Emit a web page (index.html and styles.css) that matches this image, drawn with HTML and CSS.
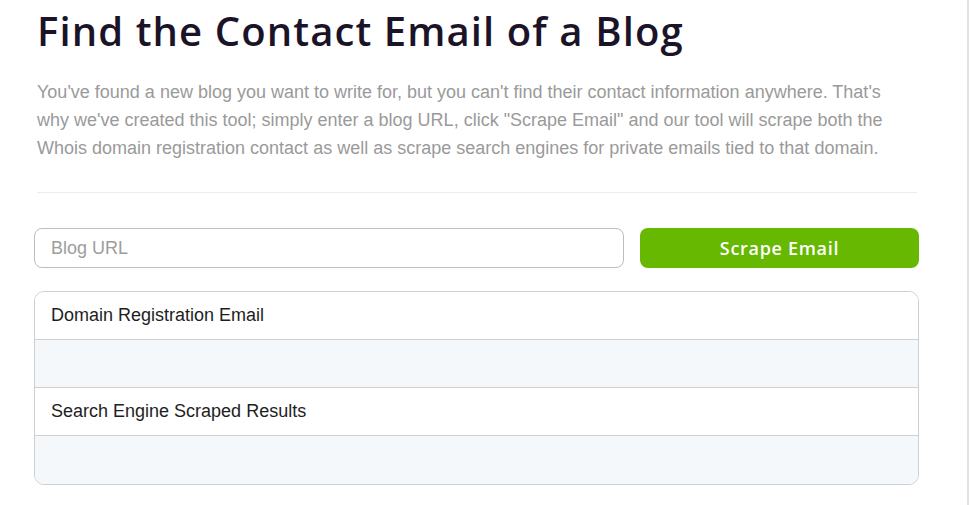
FILE: index.html
```html
<!DOCTYPE html>
<html>
<head>
<meta charset="utf-8">
<link rel="stylesheet" href="styles.css">
</head>
<body>
<div class="page">
  <main class="tool">
    <h1 class="title">Find the Contact Email of a Blog</h1>
    <p class="intro">You've found a new blog you want to write for, but you can't find their contact information anywhere. That's why we've created this tool; simply enter a blog URL, click "Scrape Email" and our tool will scrape both the Whois domain registration contact as well as scrape search engines for private emails tied to that domain.</p>
    <hr class="divider">
    <form class="search">
      <input class="url-input" type="text" placeholder="Blog URL">
      <button class="scrape-btn" type="button">Scrape Email</button>
    </form>
    <section class="results">
      <div class="results-head">Domain Registration Email</div>
      <div class="results-body"></div>
      <div class="results-head">Search Engine Scraped Results</div>
      <div class="results-body last"></div>
    </section>
  </main>
</div>
</body>
</html>
```

FILE: styles.css
```css
html, body {
  margin: 0;
  padding: 0;
  background: #fff;
}
.page {
  width: 967px;
  height: 505px;
  border-right: 2px solid #e2e2e2;
  box-sizing: content-box;
}
.tool {
  width: 885px;
  margin-left: 34px;
  padding-top: 1px;
}
.title {
  font-family: "Open Sans", "Noto Sans", sans-serif;
  font-weight: 600;
  font-size: 40px;
  line-height: 48px;
  color: #1b1429;
  margin: 6px 0 0 3px;
  letter-spacing: 1.1px;
}
.intro {
  font-family: "Liberation Sans", Arial, sans-serif;
  font-size: 18px;
  line-height: 28px;
  color: #9a9a9a;
  margin: 23px 0 0 3px;
  max-width: 852px;
}
.divider {
  border: 0;
  border-top: 1px solid #ececec;
  margin: 30px 2px 0 3px;
}
.search {
  display: flex;
  gap: 16px;
  margin-top: 35px;
}
.url-input {
  flex: 0 0 590px;
  height: 40px;
  box-sizing: border-box;
  border: 1px solid #bdbdbd;
  border-radius: 8px;
  padding: 0 16px;
  font-family: "Liberation Sans", Arial, sans-serif;
  font-size: 18px;
  color: #333;
  outline: none;
}
.url-input::placeholder {
  color: #9d9d9d;
}
.scrape-btn {
  flex: 1;
  height: 40px;
  border: 0;
  border-radius: 8px;
  background: #66b800;
  color: #fff;
  font-family: "Open Sans", "Noto Sans", sans-serif;
  font-weight: 600;
  font-size: 18px;
  letter-spacing: 0.7px;
  cursor: pointer;
}
.results {
  margin-top: 23px;
  border: 1px solid #cfcfcf;
  border-radius: 10px;
  overflow: hidden;
}
.results-head {
  height: 47px;
  border-bottom: 1px solid #d0d0d0;
  padding-left: 16px;
  display: flex;
  align-items: center;
  font-family: "Liberation Sans", Arial, sans-serif;
  font-size: 18px;
  color: #1e1e1e;
  background: #fff;
}
.results-body {
  height: 47px;
  background: #f5f8fb;
  border-bottom: 1px solid #d0d0d0;
}
.results-body.last {
  border-bottom: 0;
  height: 48px;
}
```
